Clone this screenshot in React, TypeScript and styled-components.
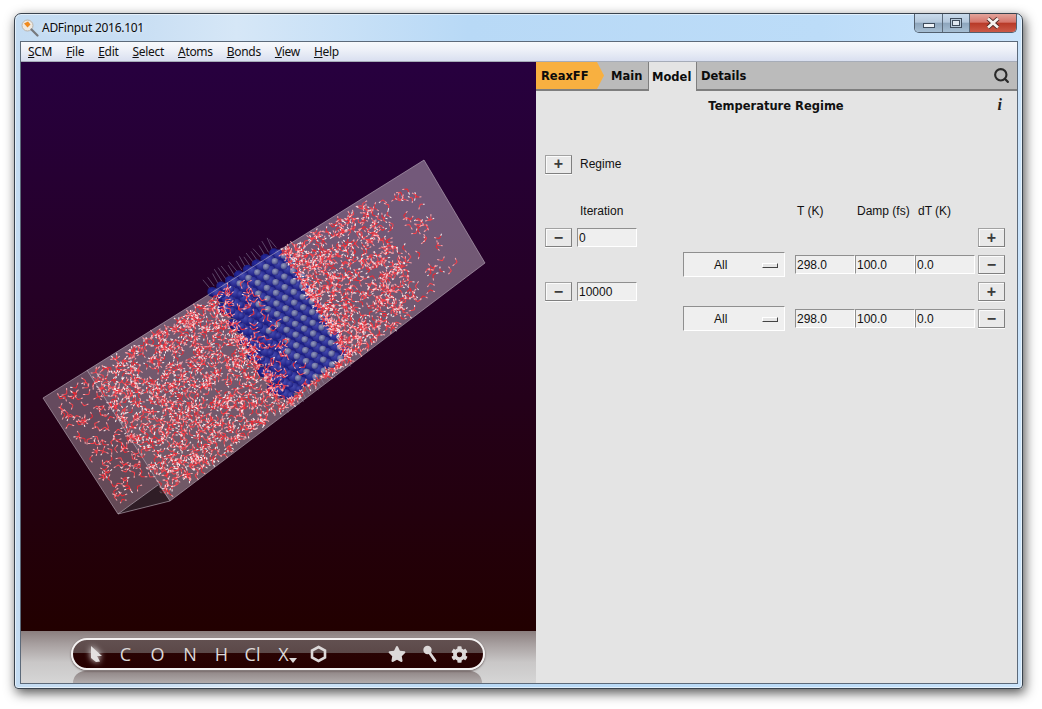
import React, { useMemo } from "react";
import styled, { createGlobalStyle } from "styled-components";
import { Search } from "lucide-react";
import { FaCog, FaStar } from "react-icons/fa";

const Global = createGlobalStyle`
  html, body { margin: 0; padding: 0; background: #fff; }
  * { box-sizing: border-box; }
`;
const Root = styled.div`
  padding: 13px 0 0 14px;
  width: 1042px;
  height: 709px;
  overflow: hidden;
`;
const Frame = styled.div`
  width: 1009px;
  height: 676px;
  display: flex;
  flex-direction: column;
  border: 1px solid #39434e;
  border-radius: 7px 7px 4px 4px;
  background: linear-gradient(90deg, #c4dcf2 0, #c8def3 12%, #d6e7f7 22%, #b8d9f6 45%, #bcdcf8 80%, #cbe4fb 100%);
  box-shadow: 2px 4px 12px rgba(0, 0, 0, 0.68), inset 0 0 0 1px rgba(255, 255, 255, 0.55);
`;
const TitleBar = styled.div`
  height: 27px;
  display: flex;
  padding: 0 5px 0 6px;
  font: 12px "Noto Sans", "Open Sans", sans-serif;
  color: #0b0b0b;
`;
const TitleIcon = styled.svg`
  width: 18px;
  height: 18px;
  margin: 5px 3px 0 0;
  flex: none;
`;
const TitleText = styled.div`
  line-height: 27px;
  letter-spacing: -0.28px;
  text-shadow: 0 0 6px rgba(255, 255, 255, 0.9);
`;
const WinControls = styled.div`
  margin-left: auto;
  display: flex;
  height: 19px;
  border: 1px solid #52606f;
  border-top: 0;
  border-radius: 0 0 5px 5px;
  overflow: hidden;
`;
const WinButton = styled.div<{ $w: number; $close?: boolean }>`
  width: ${(p) => p.$w}px;
  display: flex;
  align-items: center;
  justify-content: center;
  border-right: ${(p) => (p.$close ? "0" : "1px solid #5b6a7a")};
  background: ${(p) =>
    p.$close
      ? "linear-gradient(#e3a49b 0, #d6756b 45%, #b83a28 52%, #cb5a48 100%)"
      : "linear-gradient(#c9dbec 0, #b4c8dc 45%, #8ea6bd 52%, #a7bfd4 100%)"};
`;
const MinGlyph = styled.div`
  width: 12px;
  height: 5px;
  margin-top: 5px;
  border: 1px solid #3e4c5c;
  background: #eef3f8;
`;
const MaxGlyph = styled.div`
  width: 12px;
  height: 10px;
  border: 1px solid #3e4c5c;
  background: #b8cadb;
  display: flex;
  align-items: center;
  justify-content: center;
  &::after {
    content: "";
    width: 6px;
    height: 4px;
    border: 1px solid #3e4c5c;
    background: #dfe8f1;
  }
`;
const Client = styled.div`
  margin: 0 4px 4px 5px;
  height: 643px;
  border: 1px solid #5c6a7a;
  display: flex;
  flex-direction: column;
  background: #e4e4e4;
`;
const MenuBar = styled.div`
  height: 20px;
  display: flex;
  gap: 14px;
  padding: 0 0 0 7px;
  align-items: center;
  background: linear-gradient(#f7f9fc 0, #eef1f8 40%, #d9dff0 100%);
  border-bottom: 1px solid #a6acb8;
  font: 12px "Noto Sans", "Open Sans", sans-serif;
  color: #111;
`;
const MenuItem = styled.span`
  letter-spacing: -0.3px;
`;
const Main = styled.div`
  flex: 1;
  display: flex;
  min-height: 0;
`;
const LeftPane = styled.div`
  width: 515px;
  display: flex;
  flex-direction: column;
`;
const Scene = styled.svg`
  display: block;
  width: 515px;
  height: 569px;
`;
const ToolShelf = styled.div`
  position: relative;
  height: 52px;
  padding: 7px 0 0 50px;
  background: linear-gradient(#8a7e7e 0, #a79f9f 25%, #c9c7c7 60%, #d6d6d6 100%);
  &::after {
    content: "";
    position: absolute;
    left: 52px;
    width: 409px;
    bottom: 0;
    height: 12px;
    border-radius: 16px 16px 0 0;
    background: linear-gradient(#8f8585, #b2acac);
  }
`;
const Pill = styled.div`
  position: relative;
  z-index: 1;
  width: 414px;
  height: 32px;
  display: flex;
  align-items: center;
  padding-left: 8px;
  border: 2px solid #f4f2f2;
  border-radius: 16px;
  background: linear-gradient(#625050 0, #5b4848 48%, #290303 48%, #260000 100%);
  box-shadow: 0 1px 2px rgba(40, 20, 20, 0.6);
  color: #dcd8d8;
  font: 18px "Open Sans", "Noto Sans", sans-serif;
`;
const Tool = styled.div<{ $w: number }>`
  position: relative;
  width: ${(p) => p.$w}px;
  height: 100%;
  display: flex;
  align-items: center;
  justify-content: center;
  flex: none;
`;
const ToolGap = styled.div<{ $w: number }>`
  width: ${(p) => p.$w}px;
  flex: none;
`;
const Caret = styled.span`
  position: absolute;
  right: 2px;
  bottom: 5px;
  width: 0;
  height: 0;
  border-left: 4px solid transparent;
  border-right: 4px solid transparent;
  border-top: 5px solid #dcd8d8;
`;
const RightPane = styled.div`
  flex: 1;
  display: flex;
  flex-direction: column;
  background: #e4e4e4;
  color: #111;
  font: 12px "Liberation Sans", Arial, sans-serif;
`;
const TabBar = styled.div`
  height: 29px;
  display: flex;
  align-items: stretch;
  background: #bbbbbb;
  border-bottom: 2px solid #7e7e7e;
  font: bold 11.5px "DejaVu Sans", Verdana, sans-serif;
  color: #0c0c0c;
`;
const Crumb = styled.div`
  width: 68px;
  padding-left: 5px;
  display: flex;
  align-items: center;
  background: #f8b040;
  clip-path: polygon(0 0, 61px 0, 100% 50%, 61px 100%, 0 100%);
`;
const Tab = styled.div<{ $active?: boolean; $w: number; $pad: number }>`
  width: ${(p) => p.$w}px;
  padding-left: ${(p) => p.$pad}px;
  display: flex;
  align-items: center;
  height: ${(p) => (p.$active ? "29px" : "auto")};
  background: ${(p) => (p.$active ? "#e4e4e4" : "transparent")};
  border-left: ${(p) => (p.$active ? "1.5px solid #7e7e7e" : "0")};
  border-right: ${(p) => (p.$active ? "1.5px solid #7e7e7e" : "0")};
`;
const TabSearch = styled.div`
  margin-left: auto;
  padding-right: 7px;
  display: flex;
  align-items: center;
  color: #2a2a2a;
`;
const Heading = styled.div`
  position: relative;
  height: 28px;
  padding: 2px 1px 0 0;
  display: flex;
  align-items: center;
  justify-content: center;
  font: bold 11.5px "DejaVu Sans", Verdana, sans-serif;
`;
const InfoMark = styled.span`
  position: absolute;
  right: 15px;
  top: 5px;
  font: italic bold 16px "Liberation Serif", serif;
  color: #222;
`;
const RegimeRow = styled.div`
  margin: 35px 0 0 9px;
  height: 20px;
  display: flex;
  align-items: center;
  gap: 8px;
`;
const Table = styled.div`
  margin: 28px 0 0 9px;
  display: grid;
  grid-template-columns: 27px 5px 60px 46px 102px 10px 60px 60px 60px 3px 27px;
  grid-template-rows: 22px 27px 27px 27px 27px;
  align-items: center;
`;
const Head = styled.div<{ $col: number; $pad: number }>`
  grid-row: 1;
  grid-column: ${(p) => p.$col};
  align-self: start;
  margin-top: -1px;
  line-height: 20px;
  padding-left: ${(p) => p.$pad}px;
  white-space: nowrap;
`;
const Btn = styled.div<{ $row: number; $col: number }>`
  grid-row: ${(p) => p.$row};
  grid-column: ${(p) => p.$col};
`;
const Push = styled.div`
  width: 27px;
  height: 19px;
  display: flex;
  align-items: center;
  justify-content: center;
  background: #e9e9e9;
  border: 1px solid;
  border-color: #a2a2a2 #7f7f7f #7f7f7f #a2a2a2;
  box-shadow: inset 1px 1px 0 #fbfbfb, 0 1px 0 #fafafa;
  font: bold 16px "Liberation Sans", sans-serif;
  color: #3c3c3c;
  line-height: 1;
`;
const Field = styled.input<{ $row: number; $col: number }>`
  grid-row: ${(p) => p.$row};
  grid-column: ${(p) => p.$col};
  width: 60px;
  height: 19px;
  padding: 1px 0 0 1px;
  background: #efefef;
  border: 1px solid;
  border-color: #8f8f8f #ffffff #ffffff #8f8f8f;
  font: 12px "Liberation Sans", Arial, sans-serif;
  color: #111;
  outline: 0;
  border-radius: 0;
`;
const Choice = styled.div<{ $row: number }>`
  grid-row: ${(p) => p.$row};
  grid-column: 5;
  position: relative;
  width: 102px;
  height: 25px;
  display: flex;
  align-items: center;
  padding-left: 30px;
  background: #efefef;
  border: 1px solid;
  border-color: #8f8f8f #ffffff #ffffff #8f8f8f;
`;
const ChoiceMark = styled.span`
  position: absolute;
  right: 6px;
  top: 10px;
  width: 16px;
  height: 5px;
  background: #e6e6e6;
  border: 1px solid;
  border-color: #fff #444 #444 #fff;
`;

function rng(seed: number) {
  return () => {
    seed |= 0;
    seed = (seed + 0x6d2b79f5) | 0;
    let t = Math.imul(seed ^ (seed >>> 15), 1 | seed);
    t = (t + Math.imul(t ^ (t >>> 7), 61 | t)) ^ t;
    return ((t ^ (t >>> 14)) >>> 0) / 4294967296;
  };
}
const P = (u: number, v: number): [number, number] => {
  const tx = 87 + u * 337;
  const ty = 370 - u * 210;
  const bx = 170 + u * 315;
  const by = 501 - u * 238;
  return [tx + (bx - tx) * v, ty + (by - ty) * v];
};
const f = (n: number) => n.toFixed(1);

function buildScene() {
  const r = rng(20160101);
  let red = "";
  let deep = "";
  let pink = "";
  let white = "";
  const mol = (u: number, v: number, whiteChance: number) => {
    const [x, y] = P(u, v);
    const a = r() * Math.PI * 2;
    const b = r() < 0.5 ? 1.82 : -1.82;
    const l1 = 4.5 + r() * 1.6;
    const l2 = 4.5 + r() * 1.6;
    const ends: [number, number][] = [
      [x + Math.cos(a) * l1, y + Math.sin(a) * l1],
      [x + Math.cos(a + b) * l2, y + Math.sin(a + b) * l2],
    ];
    const useRed = r() < 0.6;
    ends.forEach(([ex, ey]) => {
      const mx = x + (ex - x) * 0.6;
      const my = y + (ey - y) * 0.6;
      const seg = `M${f(x)} ${f(y)}L${f(mx)} ${f(my)}`;
      if (useRed) red += seg;
      else deep += seg;
      const tip = `M${f(mx)} ${f(my)}L${f(ex)} ${f(ey)}`;
      if (r() < whiteChance) white += tip;
      else pink += tip;
    });
  };
  for (let i = 0; i < 1050; i++) mol(r() * 0.375, 0.03 + r() * 0.94, 0.42);
  for (let i = 0; i < 110; i++) mol(-0.115 + r() * 0.12, 0.05 + r() * 0.76, 0.1);
  for (let i = 0; i < 700; i++) {
    const t = r();
    mol(0.575 + Math.pow(t, 1.5) * 0.25, 0.03 + r() * 0.94, 0.36);
  }
  for (let i = 0; i < 55; i++) mol(0.82 + r() * 0.12, 0.08 + r() * 0.84, 0.25);
  for (let i = 0; i < 130; i++) {
    const t = r();
    mol(0.37 + t * t * 0.1, 0.02 + r() * 0.9, 0.1);
  }
  for (let i = 0; i < 40; i++) mol(0.37 + r() * 0.2, 0.94 + r() * 0.03, 0.3);
  const atoms: { x: number; y: number; c: string; s: number }[] = [];
  const cols = 8;
  const rows = 14;
  for (let layer = 0; layer < 3; layer++) {
    for (let i = 0; i < cols; i++) {
      for (let j = 0; j < rows; j++) {
        const u = 0.372 + (i + (j % 2) * 0.5 + layer * 0.33) * 0.0262;
        const v = 0.0 + (j + layer * 0.4) * 0.0665;
        const [x, y] = P(u, v);
        const fill =
          layer === 2
            ? i >= 3 || (i === 2 && j % 3 === 0)
              ? "url(#atomLight)"
              : "url(#atomMid)"
            : layer === 1
              ? "url(#atomMid)"
              : "url(#atomDark)";
        atoms.push({ x, y, c: fill, s: layer === 2 ? 3.3 : 5 });
      }
    }
  }
  let spikes = "";
  for (let i = 0; i < 18; i++) {
    const u = 0.372 + i * 0.0115;
    const [x, y] = P(u, -0.02 - (i % 2) * 0.008);
    spikes += `M${f(x)} ${f(y)}l${f(-5.5 - r() * 3)} ${f(-8 - r() * 5)}`;
    const [x2, y2] = P(u + 0.004, 0.93);
    spikes += `M${f(x2)} ${f(y2)}l${f(4 + r() * 2)} ${f(6 + r() * 4)}`;
  }
  return { red, deep, pink, white, atoms, spikes };
}

function Viewer() {
  const s = useMemo(buildScene, []);
  return (
    <Scene viewBox="21 62 515 569">
      <defs>
        <linearGradient id="sky" x1="0" y1="0" x2="0" y2="1">
          <stop offset="0" stopColor="#27003f" />
          <stop offset="1" stopColor="#220000" />
        </linearGradient>
        <radialGradient id="atomLight" cx="0.4" cy="0.35" r="0.7">
          <stop offset="0" stopColor="#989ec0" />
          <stop offset="0.6" stopColor="#666c9e" />
          <stop offset="1" stopColor="#2a2c80" />
        </radialGradient>
        <radialGradient id="atomMid" cx="0.4" cy="0.35" r="0.7">
          <stop offset="0" stopColor="#464cb0" />
          <stop offset="1" stopColor="#1a1b80" />
        </radialGradient>
        <radialGradient id="atomDark" cx="0.4" cy="0.35" r="0.7">
          <stop offset="0" stopColor="#262aa0" />
          <stop offset="1" stopColor="#121260" />
        </radialGradient>
      </defs>
      <rect x="21" y="62" width="515" height="569" fill="url(#sky)" />
      <polygon points="43,398 424,160 485,263 170,501 118,514" fill="#d8cdd8" fillOpacity="0.36" />
      <polygon points="87,370 424,160 485,263 170,501" fill="#e8e0e8" fillOpacity="0.1" />
      <path d={s.spikes} stroke="#9a96ae" strokeOpacity="0.6" strokeWidth="0.8" fill="none" />
      {s.atoms.map((a, i) => (
        <circle key={i} cx={a.x} cy={a.y} r={a.s} fill={a.c} />
      ))}
      <path d={s.deep} stroke="#ea2a34" strokeWidth="1.05" fill="none" />
      <path d={s.red} stroke="#f6404a" strokeWidth="1.05" fill="none" />
      <path d={s.pink} stroke="#f8a4aa" strokeWidth="1.05" fill="none" />
      <path d={s.white} stroke="#f6e8ea" strokeWidth="1.05" fill="none" />
      <polygon points="118,514 158,485 170,501" fill="#1a0c14" fillOpacity="0.72" />
      <path
        d="M43 398L424 160L485 263L170 501L118 514ZM87 370L170 501M118 514L158 485"
        fill="none"
        stroke="#c8bcc8"
        strokeOpacity="0.55"
        strokeWidth="1"
      />
    </Scene>
  );
}

const tools: { label: string; w: number }[] = [
  { label: "C", w: 31 },
  { label: "O", w: 33 },
  { label: "N", w: 32 },
  { label: "H", w: 31 },
  { label: "Cl", w: 31 },
];

function Row({ row, v }: { row: number; v: string }) {
  return (
    <>
      <Choice $row={row}>
        All
        <ChoiceMark />
      </Choice>
      <Field $row={row} $col={7} readOnly value="298.0" />
      <Field $row={row} $col={8} readOnly value="100.0" />
      <Field $row={row} $col={9} readOnly value={v} />
      <Btn $row={row} $col={11}>
        <Push>−</Push>
      </Btn>
    </>
  );
}

function IterRow({ row, v }: { row: number; v: string }) {
  return (
    <>
      <Btn $row={row} $col={1}>
        <Push>−</Push>
      </Btn>
      <Field $row={row} $col={3} readOnly value={v} />
      <Btn $row={row} $col={11}>
        <Push>+</Push>
      </Btn>
    </>
  );
}

export default function App() {
  return (
    <Root>
      <Global />
      <Frame>
        <TitleBar>
          <TitleIcon viewBox="0 0 18 18">
            <circle cx="6.5" cy="6.5" r="5.5" fill="#efe9e0" stroke="#b9b4ac" strokeWidth="1" />
            <path d="M3 4.5l4-2 2.5 3-3 3z" fill="#f08a1c" />
            <path d="M10.5 10.5L16.5 16.5" stroke="#77797d" strokeWidth="2.2" strokeLinecap="round" />
          </TitleIcon>
          <TitleText>ADFinput 2016.101</TitleText>
          <WinControls>
            <WinButton $w={28}>
              <MinGlyph />
            </WinButton>
            <WinButton $w={27}>
              <MaxGlyph />
            </WinButton>
            <WinButton $w={46} $close>
              <svg width="18" height="12" viewBox="0 0 18 12">
                <path d="M4 1.5L14 10.5M14 1.5L4 10.5" stroke="#4d2a26" strokeWidth="4.4" />
                <path d="M4 1.5L14 10.5M14 1.5L4 10.5" stroke="#f6f2ee" strokeWidth="2.8" />
              </svg>
            </WinButton>
          </WinControls>
        </TitleBar>
        <Client>
          <MenuBar>
            {["SCM", "File", "Edit", "Select", "Atoms", "Bonds", "View", "Help"].map((m) => (
              <MenuItem key={m}>
                <u>{m[0]}</u>
                {m.slice(1)}
              </MenuItem>
            ))}
          </MenuBar>
          <Main>
            <LeftPane>
              <Viewer />
              <ToolShelf>
                <Pill>
                  <Tool $w={29}>
                    <svg width="18" height="20" viewBox="0 0 18 20" style={{ filter: "drop-shadow(0 0 3px #fff)" }}>
                      <path d="M4 2L15 12H10L13 17.5L9 18L4 14Z" fill="#e4e0e0" />
                    </svg>
                  </Tool>
                  {tools.map((t) => (
                    <Tool key={t.label} $w={t.w}>
                      {t.label}
                    </Tool>
                  ))}
                  <Tool $w={31}>
                    X
                    <Caret />
                  </Tool>
                  <ToolGap $w={4} />
                  <Tool $w={30}>
                    <svg width="17" height="18" viewBox="0 0 17 18">
                      <polygon points="8.5,2 15,5.5 15,12.5 8.5,16 2,12.5 2,5.5" fill="none" stroke="#dcd8d8" strokeWidth="2.6" />
                    </svg>
                  </Tool>
                  <ToolGap $w={49} />
                  <Tool $w={30}>
                    <FaStar size={18} />
                  </Tool>
                  <ToolGap $w={3} />
                  <Tool $w={30}>
                    <svg width="16" height="18" viewBox="0 0 16 18">
                      <circle cx="5.5" cy="5" r="4.2" fill="#dcd8d8" />
                      <path d="M7 7L13 15.5" stroke="#dcd8d8" strokeWidth="2.8" strokeLinecap="round" />
                    </svg>
                  </Tool>
                  <Tool $w={28}>
                    <FaCog size={17} />
                  </Tool>
                </Pill>
              </ToolShelf>
            </LeftPane>
            <RightPane>
              <TabBar>
                <Crumb>ReaxFF</Crumb>
                <Tab $w={44} $pad={7}>
                  Main
                </Tab>
                <Tab $w={49} $pad={3} $active>
                  Model
                </Tab>
                <Tab $w={60} $pad={4}>
                  Details
                </Tab>
                <TabSearch>
                  <Search size={17} strokeWidth={3} />
                </TabSearch>
              </TabBar>
              <Heading>
                Temperature Regime
                <InfoMark>i</InfoMark>
              </Heading>
              <RegimeRow>
                <Push>+</Push>
                Regime
              </RegimeRow>
              <Table>
                <Head $col={3} $pad={3}>
                  Iteration
                </Head>
                <Head $col={7} $pad={2}>
                  T (K)
                </Head>
                <Head $col={8} $pad={2}>
                  Damp (fs)
                </Head>
                <Head $col={9} $pad={3}>
                  dT (K)
                </Head>
                <IterRow row={2} v="0" />
                <Row row={3} v="0.0" />
                <IterRow row={4} v="10000" />
                <Row row={5} v="0.0" />
              </Table>
            </RightPane>
          </Main>
        </Client>
      </Frame>
    </Root>
  );
}
